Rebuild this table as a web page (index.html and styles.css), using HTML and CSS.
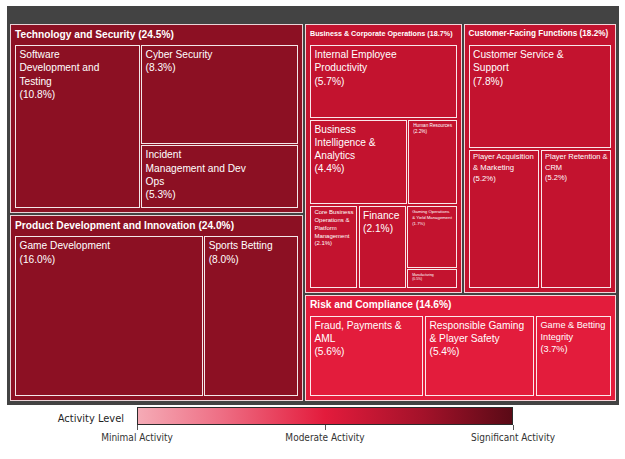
FILE: index.html
```html
<!DOCTYPE html>
<html lang="en">
<head>
<meta charset="utf-8">
<title>Activity Treemap</title>
<link rel="stylesheet" href="styles.css">
</head>
<body>
<div class="panel">
  <div class="split cols gap-g" style="grid-template-columns: minmax(0,48.5fr) minmax(0,51.5fr)">
    <div class="split rows gap-g" style="grid-template-rows: minmax(0,24.5fr) minmax(0,24fr)">
      <section class="group dark">
        <div class="gtitle">Technology and Security (24.5%)</div>
        <div class="split cols" style="grid-template-columns: minmax(0,10.8fr) minmax(0,13.6fr)">
          <div class="tile">Software<br>Development and<br>Testing<br>(10.8%)</div>
          <div class="split rows" style="grid-template-rows: minmax(0,8.3fr) minmax(0,5.3fr)">
            <div class="tile">Cyber Security<br>(8.3%)</div>
            <div class="tile">Incident<br>Management and Dev<br>Ops<br>(5.3%)</div>
          </div>
        </div>
      </section>
      <section class="group dark">
        <div class="gtitle">Product Development and Innovation (24.0%)</div>
        <div class="split cols" style="grid-template-columns: minmax(0,16fr) minmax(0,8fr)">
          <div class="tile">Game Development<br>(16.0%)</div>
          <div class="tile">Sports Betting<br>(8.0%)</div>
        </div>
      </section>
    </div>
    <div class="split rows gap-g" style="grid-template-rows: minmax(0,36.9fr) minmax(0,14.6fr)">
      <div class="split cols gap-g" style="grid-template-columns: minmax(0,18.7fr) minmax(0,18.2fr)">
        <section class="group mid">
          <div class="gtitle gt-xs">Business &amp; Corporate Operations (18.7%)</div>
          <div class="split rows" style="grid-template-rows: minmax(0,5.7fr) minmax(0,6.6fr) minmax(0,6.4fr)">
            <div class="tile">Internal Employee<br>Productivity<br>(5.7%)</div>
            <div class="split cols" style="grid-template-columns: minmax(0,4.4fr) minmax(0,2.2fr)">
              <div class="tile">Business<br>Intelligence &amp;<br>Analytics<br>(4.4%)</div>
              <div class="tile t-hr">Human Resources<br>(2.2%)</div>
            </div>
            <div class="split cols" style="grid-template-columns: minmax(0,2.1fr) minmax(0,2.1fr) minmax(0,2.2fr)">
              <div class="tile t-core">Core Business<br>Operations &amp;<br>Platform<br>Management<br>(2.1%)</div>
              <div class="tile">Finance<br>(2.1%)</div>
              <div class="split rows" style="grid-template-rows: minmax(0,1.7fr) minmax(0,0.5fr)">
                <div class="tile t-go">Gaming Operations<br>&amp; Yield Management<br>(1.7%)</div>
                <div class="tile t-mf">Manufacturing<br>(0.5%)</div>
              </div>
            </div>
          </div>
        </section>
        <section class="group mid">
          <div class="gtitle gt-s">Customer-Facing Functions (18.2%)</div>
          <div class="split rows" style="grid-template-rows: minmax(0,7.8fr) minmax(0,10.4fr)">
            <div class="tile">Customer Service &amp;<br>Support<br>(7.8%)</div>
            <div class="split cols" style="grid-template-columns: minmax(0,5.2fr) minmax(0,5.2fr)">
              <div class="tile t-pa">Player Acquisition<br>&amp; Marketing<br>(5.2%)</div>
              <div class="tile t-pr">Player Retention &amp;<br>CRM<br>(5.2%)</div>
            </div>
          </div>
        </section>
      </div>
      <section class="group bright">
        <div class="gtitle">Risk and Compliance (14.6%)</div>
        <div class="split cols" style="grid-template-columns: minmax(0,5.6fr) minmax(0,5.4fr) minmax(0,3.7fr)">
          <div class="tile">Fraud, Payments &amp;<br>AML<br>(5.6%)</div>
          <div class="tile">Responsible Gaming<br>&amp; Player Safety<br>(5.4%)</div>
          <div class="tile t-gb">Game &amp; Betting<br>Integrity<br>(3.7%)</div>
        </div>
      </section>
    </div>
  </div>
</div>
<div class="legend">
  <div class="legend-title">Activity Level</div>
  <div class="scale">
    <div class="bar"></div>
    <span class="tick" style="left:0%"></span>
    <span class="tick" style="left:50%"></span>
    <span class="tick" style="left:100%"></span>
    <span class="tick-label" style="left:0%">Minimal Activity</span>
    <span class="tick-label" style="left:50%">Moderate Activity</span>
    <span class="tick-label" style="left:100%">Significant Activity</span>
  </div>
</div>
</body>
</html>
```

FILE: styles.css
```css
body {
  margin: 0;
  background: #ffffff;
  font-family: "Liberation Sans", Arial, sans-serif;
}

.panel {
  box-sizing: border-box;
  width: 612px;
  height: 399px;
  margin: 6px 0 0 7px;
  padding: 18px 3px 4px 3px;
  background: #434343;
  display: grid;
}

.split {
  display: grid;
  gap: 1.5px;
  min-width: 0;
  min-height: 0;
}

.split.cols {
  grid-auto-flow: column;
}

.split.gap-g {
  gap: 2px;
}

.group {
  box-sizing: border-box;
  display: grid;
  grid-template-rows: 20px minmax(0, 1fr);
  border: 1px solid rgba(255, 255, 255, 0.82);
  padding: 0 4px 4px 4px;
  min-width: 0;
  min-height: 0;
  overflow: hidden;
}

.group.dark { background: #8c1023; }
.group.mid { background: #c3132f; }
.group.bright { background: #e31c3c; }

.gtitle {
  color: #ffffff;
  font-weight: bold;
  font-size: 10.2px;
  line-height: 1;
  padding-top: 4.5px;
  white-space: nowrap;
}

.gtitle.gt-xs { font-size: 7.2px; padding-top: 5px; }
.gtitle.gt-s { font-size: 8.2px; padding-top: 4.8px; }

.tile {
  box-sizing: border-box;
  border: 1px solid rgba(255, 255, 255, 0.9);
  padding: 2px 3.5px;
  color: #ffffff;
  font-size: 10.2px;
  line-height: 13.3px;
  white-space: nowrap;
  overflow: hidden;
  min-width: 0;
  min-height: 0;
}

.tile.t-core { font-size: 6px; line-height: 7.8px; padding-top: 2.6px; }
.tile.t-hr { font-size: 4.7px; line-height: 5.8px; padding: 2.4px 4px; }
.tile.t-go { font-size: 4.3px; line-height: 6px; padding: 2.4px 4px; }
.tile.t-mf { font-size: 3.4px; line-height: 4.7px; padding: 2.4px 4px; }
.tile.t-pa { font-size: 7.7px; line-height: 10.6px; padding-top: 1.6px; }
.tile.t-pr { font-size: 7.5px; line-height: 10.3px; padding-top: 1.6px; }
.tile.t-gb { font-size: 9.2px; line-height: 12.2px; }

.legend {
  display: flex;
  margin-top: 2px;
  font-family: "DejaVu Sans Condensed", "DejaVu Sans", sans-serif;
}

.legend-title {
  box-sizing: border-box;
  width: 137px;
  padding: 5px 13px 0 0;
  text-align: right;
  font-size: 11px;
  line-height: 14px;
  color: #1f1f1f;
}

.scale {
  position: relative;
  width: 376px;
  height: 40px;
}

.bar {
  box-sizing: border-box;
  height: 18px;
  border: 1px solid #2b2b2b;
  background: linear-gradient(to right, #f5abb6 0%, #ee6f85 22%, #e31b3c 50%, #a4122a 76%, #5a0a16 100%);
}

.tick {
  position: absolute;
  top: 18px;
  width: 1px;
  height: 5px;
  margin-left: -0.5px;
  background: #555555;
}

.tick-label {
  position: absolute;
  top: 25px;
  transform: translateX(-50%);
  white-space: nowrap;
  font-size: 10px;
  line-height: 12px;
  color: #333333;
}
```
